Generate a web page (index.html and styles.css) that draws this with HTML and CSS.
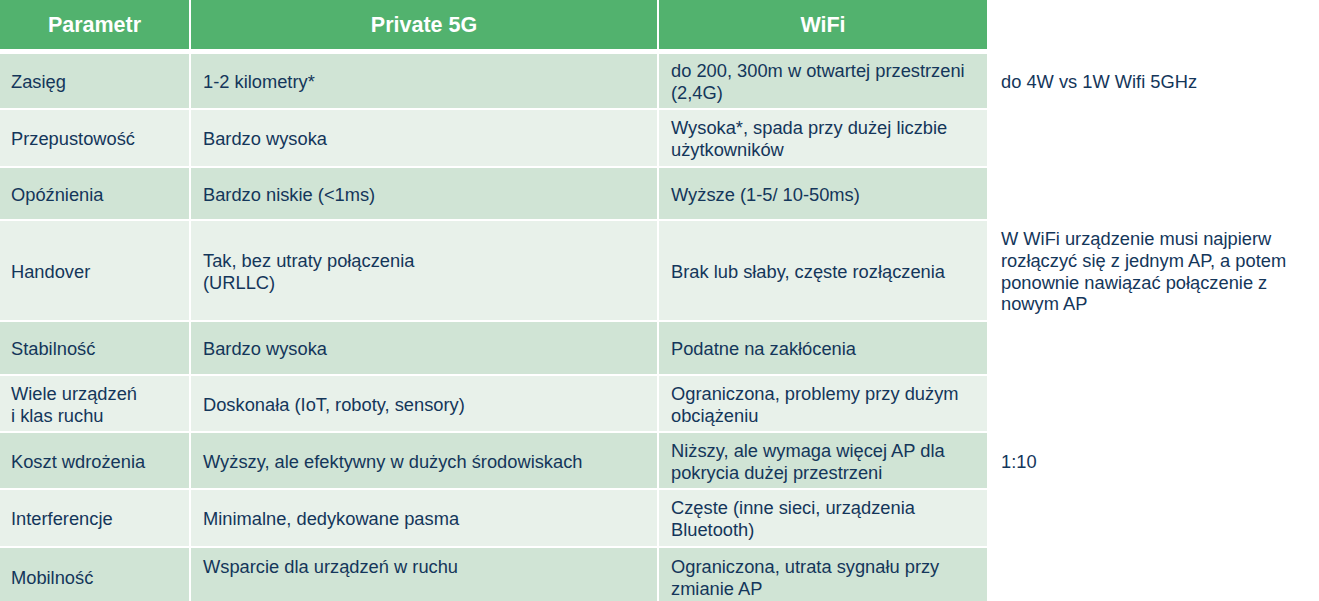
FILE: index.html
```html
<!DOCTYPE html>
<html lang="pl">
<head>
<meta charset="utf-8">
<title>Private 5G vs WiFi</title>
<link rel="stylesheet" href="styles.css">
</head>
<body>
<div class="grid">
  <div class="cell head">Parametr</div>
  <div class="cell head">Private 5G</div>
  <div class="cell head">WiFi</div>
  <div class="note"></div>

  <div class="cell dark c1">Zasięg</div>
  <div class="cell dark c2">1-2 kilometry*</div>
  <div class="cell dark c3">do 200, 300m w otwartej przestrzeni<br>(2,4G)</div>
  <div class="note">do 4W vs 1W Wifi 5GHz</div>

  <div class="cell light c1">Przepustowość</div>
  <div class="cell light c2">Bardzo wysoka</div>
  <div class="cell light c3">Wysoka*, spada przy dużej liczbie<br>użytkowników</div>
  <div class="note"></div>

  <div class="cell dark c1">Opóźnienia</div>
  <div class="cell dark c2">Bardzo niskie (&lt;1ms)</div>
  <div class="cell dark c3">Wyższe (1-5/ 10-50ms)</div>
  <div class="note"></div>

  <div class="cell light c1">Handover</div>
  <div class="cell light c2">Tak, bez utraty połączenia<br>(URLLC)</div>
  <div class="cell light c3">Brak lub słaby, częste rozłączenia</div>
  <div class="note">W WiFi urządzenie musi najpierw<br>rozłączyć się z jednym AP, a potem<br>ponownie nawiązać połączenie z<br>nowym AP</div>

  <div class="cell dark c1">Stabilność</div>
  <div class="cell dark c2">Bardzo wysoka</div>
  <div class="cell dark c3">Podatne na zakłócenia</div>
  <div class="note"></div>

  <div class="cell light c1">Wiele urządzeń<br>i klas ruchu</div>
  <div class="cell light c2">Doskonała (IoT, roboty, sensory)</div>
  <div class="cell light c3">Ograniczona, problemy przy dużym<br>obciążeniu</div>
  <div class="note"></div>

  <div class="cell dark c1">Koszt wdrożenia</div>
  <div class="cell dark c2">Wyższy, ale efektywny w dużych środowiskach</div>
  <div class="cell dark c3">Niższy, ale wymaga więcej AP dla<br>pokrycia dużej przestrzeni</div>
  <div class="note">1:10</div>

  <div class="cell light c1">Interferencje</div>
  <div class="cell light c2">Minimalne, dedykowane pasma</div>
  <div class="cell light c3">Częste (inne sieci, urządzenia<br>Bluetooth)</div>
  <div class="note"></div>

  <div class="cell dark c1">Mobilność</div>
  <div class="cell dark c2">Wsparcie dla urządzeń w ruchu<br>&nbsp;</div>
  <div class="cell dark c3">Ograniczona, utrata sygnału przy<br>zmianie AP</div>
  <div class="note"></div>
</div>
</body>
</html>
```

FILE: styles.css
```css
html, body {
  margin: 0;
  padding: 0;
  background: #ffffff;
}

body {
  font-family: "Liberation Sans", Arial, sans-serif;
  color: #14365a;
  overflow: hidden;
}

.grid {
  display: grid;
  grid-template-columns: 189px 466px 328px 1fr;
  grid-template-rows: 52px 54px 56px 51px 99px 52px 55px 55px 56px 58px;
  column-gap: 2px;
  row-gap: 2px;
  width: 1319px;
  height: 601px;
  overflow: hidden;
}

.cell {
  display: flex;
  align-items: center;
  font-size: 18.3px;
  line-height: 22px;
  white-space: nowrap;
  padding-top: 2px;
  box-sizing: border-box;
}

.head {
  height: 49px;
  padding-top: 0;
  align-self: start;
  justify-content: center;
  background: #52b26e;
  color: #ffffff;
  font-weight: bold;
  font-size: 21.5px;
}

.dark {
  background: #d0e4d5;
}

.light {
  background: #e8f1ea;
}

.c1 {
  padding-left: 11px;
}

.c2 {
  padding-left: 12px;
}

.c3 {
  padding-left: 12px;
}

.note {
  display: flex;
  align-items: center;
  padding-left: 12px;
  padding-top: 2px;
  box-sizing: border-box;
  font-size: 18.3px;
  line-height: 21.7px;
  white-space: nowrap;
  background: #ffffff;
}
```
